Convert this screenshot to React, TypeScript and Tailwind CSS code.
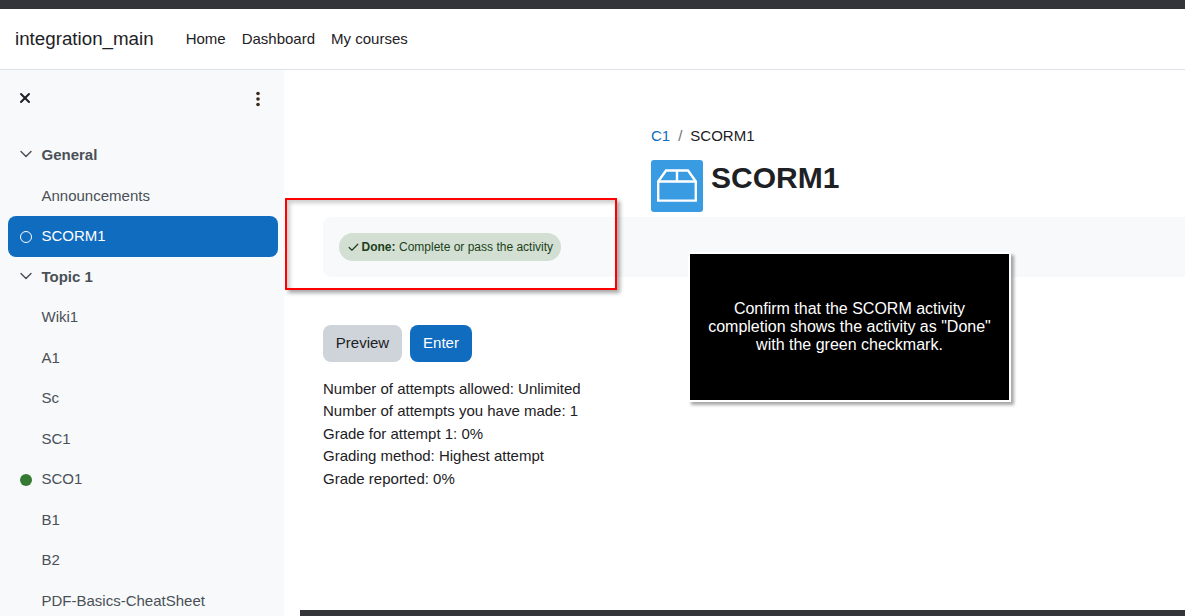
import { ChevronDown, Check, X } from "lucide-react";

type Item = { label: string; kind?: "section" | "active" | "done" };

const items: Item[] = [
  { label: "General", kind: "section" },
  { label: "Announcements" },
  { label: "SCORM1", kind: "active" },
  { label: "Topic 1", kind: "section" },
  { label: "Wiki1" },
  { label: "A1" },
  { label: "Sc" },
  { label: "SC1" },
  { label: "SCO1", kind: "done" },
  { label: "B1" },
  { label: "B2" },
  { label: "PDF-Basics-CheatSheet" },
];

const SideRow = ({ item }: { item: Item }) => {
  if (item.kind === "section") {
    return (
      <div className="flex h-[40.5px] items-center pl-[7.5px] font-bold text-[#495057]">
        <ChevronDown className="mr-[6px] mt-[-3px] h-[20px] w-[20px]" strokeWidth={1.7} />
        {item.label}
      </div>
    );
  }
  if (item.kind === "active") {
    return (
      <div className="flex h-[40.5px] items-center rounded-lg bg-[#0f6cbf] pl-[11.5px] text-white">
        <span className="mr-[10px] h-[12px] w-[12px] rounded-full border border-white" />
        {item.label}
      </div>
    );
  }
  return (
    <div className="flex h-[40.5px] items-center pl-[11.5px] text-[#495057]">
      {item.kind === "done" ? (
        <span className="mr-[10px] h-[12px] w-[12px] rounded-full bg-[#357a32]" />
      ) : (
        <span className="mr-[10px] w-[12px]" />
      )}
      {item.label}
    </div>
  );
};

export default function App() {
  return (
    <div className="relative h-[616px] w-[1185px] overflow-hidden bg-white font-['Liberation_Sans',Arial,sans-serif] text-[15px] text-[#1d2125]">
      <div className="h-[9px] bg-[#343539]" />

      <header className="flex h-[61px] items-center border-b border-[#dee2e6] bg-white pl-[15px]">
        <a className="mr-[32px] text-[18.75px]">integration_main</a>
        <nav className="flex gap-[16px]">
          <a>Home</a>
          <a>Dashboard</a>
          <a>My courses</a>
        </nav>
      </header>

      <div className="flex h-[546px]">
        <aside className="w-[284px] shrink-0 bg-[#f8f9fa] pl-[8px] pr-[6px]">
          <div className="flex h-[65.25px] items-start justify-between pl-[9px] pr-[18px] pt-[20px]">
            <X className="h-[16px] w-[16px] text-[#1d2125]" strokeWidth={3} />
            <svg className="mt-[1px] h-[16px] w-[4px]" viewBox="0 0 4 16" fill="#3a2a1d">
              <circle cx="2" cy="2.5" r="1.8" />
              <circle cx="2" cy="8" r="1.8" />
              <circle cx="2" cy="13.5" r="1.8" />
            </svg>
          </div>
          {items.map((item) => (
            <SideRow key={item.label} item={item} />
          ))}
        </aside>

        <main className="min-w-0 flex-1 pt-[55px]">
          <div className="ml-[367px] flex h-[22px] items-center">
            <a className="text-[#0f6cbf]">C1</a>
            <span className="mx-[8px] text-[#6a737b]">/</span>
            <span>SCORM1</span>
          </div>
          <div className="ml-[367px] mt-[13px] flex h-[52px]">
            <div className="flex h-[52px] w-[52px] items-center justify-center rounded-[3px] bg-[#399be2]">
              <svg className="h-[40px] w-[40px]" viewBox="0 0 40 40" fill="none" stroke="white" strokeWidth="2.4">
                <path d="M1.2 15.5 L9 4.5 H31 L38.8 15.5 V34.6 H1.2 Z" />
                <path d="M1.2 15.5 H38.8 M20 4.5 V15.5" />
              </svg>
            </div>
            <h1 className="ml-[8px] text-[30px] font-bold leading-[36px] text-[#1d2125]">SCORM1</h1>
          </div>

          <div className="ml-[39px] mt-[5px] flex h-[60px] items-center rounded-l-lg bg-[#f8f9fa] pl-[16px]">
            <span className="flex h-[28px] items-center rounded-full bg-[#d2dfd2] pl-[7.5px] pr-[8px] text-[12px] text-[#1c3f1a]">
              <Check className="mr-[2px] h-[13px] w-[13px]" strokeWidth={2.2} />
              <b className="mr-[3.5px]">Done:</b>
              Complete or pass the activity
            </span>
          </div>

          <div className="ml-[39px] mt-[48px] flex gap-[8px]">
            <button className="h-[37px] w-[79px] rounded-lg bg-[#ced4da] text-[#1d2125]">Preview</button>
            <button className="h-[37px] w-[62px] rounded-lg bg-[#0f6cbf] text-white">Enter</button>
          </div>

          <div className="ml-[39px] mt-[15.5px] leading-[22.5px]">
            <div>Number of attempts allowed: Unlimited</div>
            <div>Number of attempts you have made: 1</div>
            <div>Grade for attempt 1: 0%</div>
            <div>Grading method: Highest attempt</div>
            <div>Grade reported: 0%</div>
          </div>
        </main>
      </div>

      {/* footer strip peeking in at the bottom */}
      <div className="absolute bottom-0 left-[300px] right-0 h-[6px] bg-[#343539]" />

      {/* annotation overlays */}
      <div className="absolute left-[285px] top-[198px] h-[92px] w-[332px] border-[2px] border-[#ff0000] shadow-[3px_3px_4px_rgba(0,0,0,0.35),inset_3px_3px_4px_rgba(0,0,0,0.2)]" />
      <div className="absolute left-[688px] top-[252px] flex h-[150px] w-[323px] items-center justify-center border-[2px] border-white bg-black text-center text-[16px] leading-[18px] text-white shadow-[3px_3px_3px_rgba(0,0,0,0.35)]">
        <p>
          Confirm that the SCORM activity
          <br />
          completion shows the activity as "Done"
          <br />
          with the green checkmark.
        </p>
      </div>
    </div>
  );
}
